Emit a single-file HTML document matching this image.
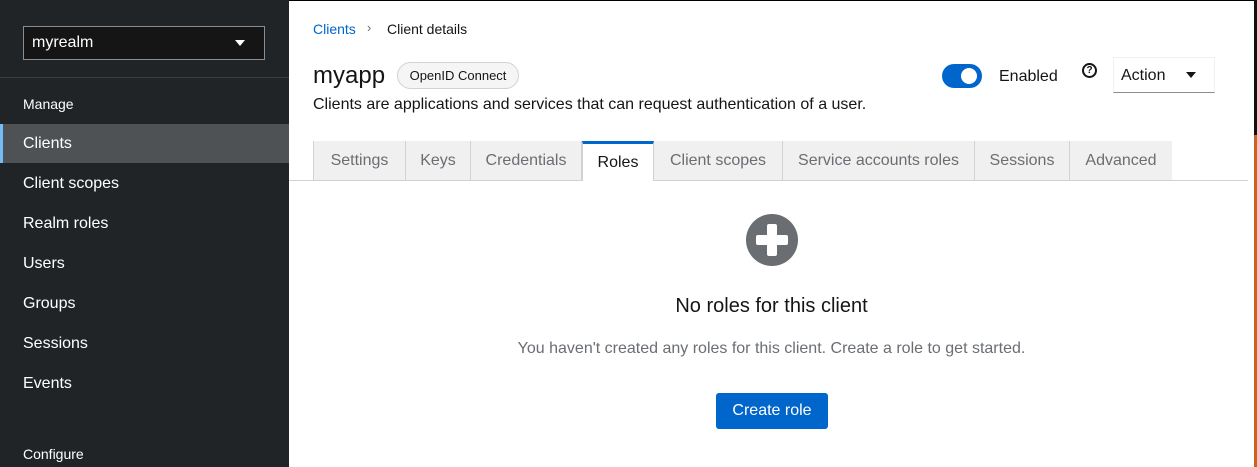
<!DOCTYPE html>
<html><head><meta charset="utf-8"><style>
*{margin:0;padding:0;box-sizing:border-box}
body{width:1257px;height:467px;overflow:hidden;font-family:"Liberation Sans",sans-serif;background:#fff;position:relative;color:#151515}
.a{position:absolute;white-space:nowrap}
#sb{position:absolute;left:0;top:0;width:289px;height:467px;background:#212427;color:#fff}
.nav{position:absolute;left:23px;font-size:16px;color:#fff}
.tab{position:absolute;top:141px;height:39px;background:#f0f0f0;border-left:1px solid #d2d2d2;color:#6a6e73;font-size:16px;text-align:center;line-height:40px}
</style></head><body>
<div id="sb">
 <div class="a" style="left:23px;top:26px;width:242px;height:34px;border:1px solid #8a8d90;background:#151515"></div>
 <div class="a" style="left:32px;top:34px;font-size:16px">myrealm</div>
 <div class="a" style="left:235px;top:40px;width:0;height:0;border-left:5px solid transparent;border-right:5px solid transparent;border-top:6px solid #fff"></div>
 <div class="a" style="left:0;top:77px;width:289px;height:1px;background:#3c3f42"></div>
 <div class="nav a" style="top:96px;font-size:14px">Manage</div>
 <div class="a" style="left:0;top:124px;width:289px;height:39px;background:#4f5255"></div>
 <div class="a" style="left:0;top:124px;width:3px;height:39px;background:#73bcf7"></div>
 <div class="nav a" style="top:135px">Clients</div>
 <div class="nav a" style="top:175px">Client scopes</div>
 <div class="nav a" style="top:215px">Realm roles</div>
 <div class="nav a" style="top:255px">Users</div>
 <div class="nav a" style="top:295px">Groups</div>
 <div class="nav a" style="top:335px">Sessions</div>
 <div class="nav a" style="top:375px">Events</div>
 <div class="nav a" style="top:446px;font-size:14px">Configure</div>
</div>
<div class="a" style="left:289px;top:0;width:968px;height:1px;background:#000"></div>
<div class="a" style="left:1254px;top:0;width:3px;height:135px;background:#111"></div>
<div class="a" style="left:1254px;top:135px;width:3px;height:332px;background:#c8641e"></div>
<div class="a" style="left:313px;top:21px;font-size:14px;color:#06c">Clients</div>
<div class="a" style="left:367px;top:20px;font-size:13px;color:#6a6e73">&#8250;</div>
<div class="a" style="left:387px;top:21px;font-size:14px">Client details</div>
<div class="a" style="left:313px;top:62px;font-size:24px">myapp</div>
<div class="a" style="left:397px;top:62px;width:122px;height:27px;border:1px solid #d2d2d2;border-radius:14px;background:#f5f5f5;font-size:13px;text-align:center;line-height:25px">OpenID Connect</div>
<div class="a" style="left:313px;top:96px;font-size:16px">Clients are applications and services that can request authentication of a user.</div>
<div class="a" style="left:942px;top:64px;width:40px;height:24px;border-radius:12px;background:#06c"></div>
<div class="a" style="left:961px;top:68px;width:16px;height:16px;border-radius:50%;background:#fff"></div>
<div class="a" style="left:999px;top:68px;font-size:16px">Enabled</div>
<div class="a" style="left:1082px;top:63px;width:15px;height:15px;border:2px solid #151515;border-radius:50%;font-size:10px;font-weight:bold;text-align:center;line-height:11px">?</div>
<div class="a" style="left:1113px;top:57px;width:102px;height:36px;border:1px solid #f0f0f0;border-bottom:1px solid #8a8d90"></div>
<div class="a" style="left:1121px;top:67px;font-size:16px">Action</div>
<div class="a" style="left:1186px;top:72px;width:0;height:0;border-left:5px solid transparent;border-right:5px solid transparent;border-top:6px solid #151515"></div>
<div class="a" style="left:289px;top:180px;width:959px;height:1px;background:#d2d2d2"></div>
<div class="tab" style="left:313px;width:92px">Settings</div>
<div class="tab" style="left:405px;width:65px">Keys</div>
<div class="tab" style="left:470px;width:112px;border-right:1px solid #d2d2d2">Credentials</div>
<div class="tab" style="left:582px;width:72px;background:#fff;color:#151515;border-top:3px solid #06c;height:40px;line-height:37px;border-left:1px solid #d2d2d2;border-right:1px solid #d2d2d2">Roles</div>
<div class="tab" style="left:654px;width:128px;border-left:none">Client scopes</div>
<div class="tab" style="left:782px;width:192px">Service accounts roles</div>
<div class="tab" style="left:974px;width:95px">Sessions</div>
<div class="tab" style="left:1069px;width:103px">Advanced</div>
<svg class="a" style="left:746px;top:214px" width="52" height="52" viewBox="0 0 52 52"><circle cx="26" cy="26" r="26" fill="#6a6e73"/><rect x="10" y="21" width="32" height="10" rx="2" fill="#fff"/><rect x="21" y="10" width="10" height="32" rx="2" fill="#fff"/></svg>
<div class="a" style="left:289px;width:965px;top:295px;font-size:20px;text-align:center">No roles for this client</div>
<div class="a" style="left:289px;width:965px;top:340px;font-size:16px;color:#6a6e73;text-align:center">You haven't created any roles for this client. Create a role to get started.</div>
<div class="a" style="left:716px;top:393px;width:112px;height:36px;background:#06c;border-radius:3px;color:#fff;font-size:16px;text-align:center;line-height:36px">Create role</div>
</body></html>
